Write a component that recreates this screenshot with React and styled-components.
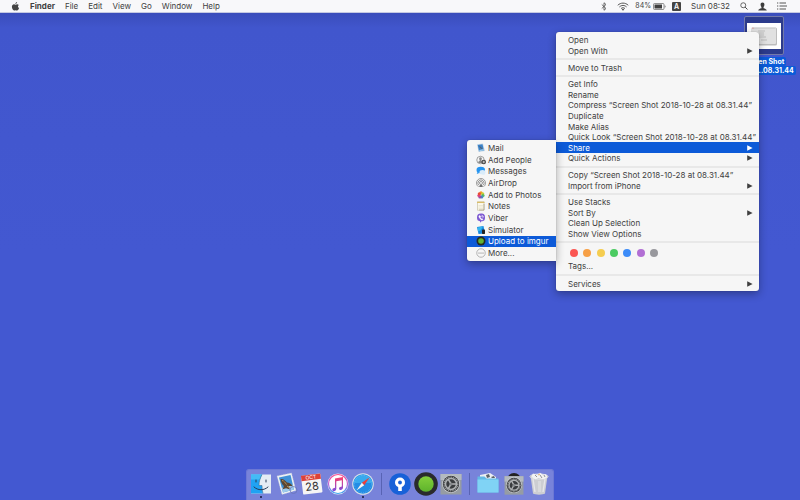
import React from 'react';

import styled, { createGlobalStyle, css } from 'styled-components';

const GlobalStyle = createGlobalStyle`
* {
  box-sizing: border-box;
}
body {
  margin: 0;
  overflow: hidden;
  font-family: Inter, 'Liberation Sans', sans-serif;
  font-size: 8px;
  color: #404040;
}
button {
  margin: 0;
  padding: 0;
  border: none;
  background: none;
  font: inherit;
  color: inherit;
  cursor: default;
}
svg {
  display: block;
  flex: none;
}
`

const Screen = styled.div`
  position: relative;
  display: flex;
  flex-direction: column;
  min-height: 100vh;
  background: linear-gradient(#3a4dbb 13px, #4156cd 28px, #4358d1 50%, #4358d1);
`

const MenuBar = styled.header`
  display: flex;
  align-items: center;
  justify-content: space-between;
  height: 13px;
  padding: 0 13px 0 11px;
  background: #f8f8fa;
  border-bottom: 1px solid #c5c9e2;
`

const BarMenus = styled.nav`
  display: flex;
  align-items: center;
  gap: 10px;
`

const BarItem = styled.button`
  line-height: 12px;
  font-weight: ${({ $bold }) => ($bold ? 700 : 400)};
`

const BarStatus = styled.div`
  display: flex;
  align-items: center;
  gap: 10px;
  line-height: 12px;
`

const Battery = styled.span`
  display: flex;
  align-items: center;
  gap: 2px;
  font-size: 7px;
  margin: 0 -4px;
`

const InputSource = styled.span`
  width: 9px;
  height: 9px;
  border-radius: 1px;
  background: #444;
  color: #fff;
  font-size: 7px;
  font-weight: 600;
  line-height: 9px;
  text-align: center;
`

const Desktop = styled.main`
  flex: 1;
  display: flex;
  flex-direction: column;
  align-items: flex-end;
  padding: 3px 3px 0;
`

const DesktopFile = styled.button`
  display: flex;
  flex-direction: column;
  align-items: center;
  width: 67px;
`

const Preview = styled.span`
  display: flex;
  align-items: center;
  justify-content: center;
  width: 40px;
  height: 39px;
  margin-bottom: 2px;
  border: 1px solid #737aa9;
  border-radius: 2px;
  background: #2c3b8c;
`

const FileName = styled.span`
  padding: 0 2px;
  border-radius: 2px;
  background: #0b5bd9;
  color: #fff;
  font-size: 7px;
  font-weight: 700;
  line-height: 9px;
  white-space: nowrap;
`

const panel = css`
  display: flex;
  flex-direction: column;
  background: #f6f6f6;
  box-shadow: 0 3px 8px rgba(0, 0, 0, 0.32), 0 0 1px rgba(0, 0, 0, 0.4);
`

const ContextMenu = styled.div`
  ${panel}
  position: absolute;
  top: 32px;
  right: 41px;
  width: 203px;
  min-height: 259px;
  padding: 3px 0 2px;
  border-radius: 3px;
`

const ShareMenu = styled.div`
  ${panel}
  position: absolute;
  top: 108px;
  right: 100%;
  width: 89px;
  min-height: 121px;
  padding: 2px 0;
  border-radius: 3px 0 0 3px;
`

const Row = styled.button`
  flex: 1 1 10px;
  display: flex;
  align-items: center;
  justify-content: space-between;
  padding: 0 6px 0 12px;
  line-height: 10px;
  text-align: left;
  white-space: nowrap;
  background: ${({ $active }) => ($active ? '#0c5ad8' : 'transparent')};
  color: ${({ $active }) => ($active ? '#fff' : 'inherit')};
`

const ShareRow = styled(Row)`
  justify-content: flex-start;
  gap: 2px;
  padding: 0 4px 0 9px;
`

const Divider = styled.hr`
  flex: none;
  width: 100%;
  height: 2px;
  margin: 2px 0;
  border: none;
  background: #e8e8e8;
`

const Tags = styled.div`
  flex: none;
  height: 27px;
  padding: 4px 12px 0;
`

const TagDots = styled.div`
  display: flex;
  gap: 5px;
  height: 8px;
  padding-left: 2px;
`

const Dot = styled.button`
  width: 8px;
  height: 8px;
  margin-right: ${({ $wide }) => ($wide ? '1px' : 0)};
  border-radius: 50%;
  background: ${({ $color }) => $color};
`

const TagsLabel = styled.button`
  display: block;
  margin-top: 4px;
  line-height: 10px;
`

const Dock = styled.footer`
  position: absolute;
  bottom: 0;
  left: 50%;
  transform: translateX(-50%);
  display: flex;
  justify-content: space-between;
  width: 308px;
  height: 31px;
  padding: 2px 2px 0;
  border: 1px solid #6c78d4;
  border-bottom: none;
  border-radius: 3px 3px 0 0;
  background: #7883da;
`

const DockItem = styled.button`
  display: flex;
  flex-direction: column;
  align-items: center;
  width: 24px;
`

const Running = styled.span`
  width: 2px;
  height: 2px;
  border-radius: 50%;
  background: #14183c;
`

const DockLine = styled.span`
  width: 10px;
  height: 22px;
  margin-top: 1px;
  background: linear-gradient(#5863b4, #5863b4) center / 1px 100% no-repeat;
`

const Arrow = () => (
  <svg width="6" height="6" viewBox="0 0 6 6" fill="currentColor">
    <path d="M.2 .2 5.600 3 .2 5.800z" />
  </svg>
)

const AppleIcon = () => (
  <svg width="9" height="9" viewBox="0 0 18 18" fill="#444">
    <path d="M12.2 0c.1 2-1.500 3.800-3.400 3.900C8.600 2.100 10.200.3 12.200 0zM15.600 6c-2.400 1.500-2.200 4.900.6 6-.7 2-2.300 5-4.100 5-1.200 0-1.600-.7-3-.7s-1.900.7-3 .7C4 17 1.800 12.900 1.800 9.700c0-3.300 2.100-5.100 4.200-5.100 1.300 0 2.300.8 3.100.8.8 0 2-.9 3.500-.9 1 0 2.200.5 3 1.500z" />
  </svg>
)

const BluetoothIcon = () => (
  <svg width="6" height="9" viewBox="0 0 12 18" fill="none" stroke="#444" strokeWidth="1.5">
    <path d="M1.500 5 10 13 6 16.500V1.500L10 5 1.500 13" />
  </svg>
)

const WifiIcon = () => (
  <svg width="12" height="9" viewBox="0 0 24 18" fill="none" stroke="#555" strokeWidth="2">
    <path d="M1.500 6.500C7.500 .8 16.500.8 22.500 6.500M4.800 9.900c4.200-4 10.200-4 14.400 0M8 13.200c2.300-2.200 5.700-2.200 8 0" />
    <path d="M12 17.500l-2.500-2.600c1.400-1.200 3.600-1.200 5 0z" fill="#555" stroke="none" />
  </svg>
)

const BatteryIcon = () => (
  <svg width="13" height="7" viewBox="0 0 26 14">
    <rect x="1" y="1" width="21" height="12" rx="2" fill="none" stroke="#666" strokeWidth="1.400" />
    <rect x="3" y="3" width="15" height="8" fill="#404040" />
    <path d="M23.500 4.500c2 .8 2 4.200 0 5z" fill="#555" />
  </svg>
)

const SearchIcon = () => (
  <svg width="8" height="8" viewBox="0 0 16 16" fill="none" stroke="#444" strokeWidth="1.600">
    <circle cx="6.500" cy="6.500" r="5" />
    <path d="M10.200 10.200 15 15" strokeWidth="2" />
  </svg>
)

const UserIcon = () => (
  <svg width="9" height="9" viewBox="0 0 18 18" fill="#3c3c3c">
    <path d="M9 1c3 0 4.200 2 3.800 5-.2 2-1 3.300-1.700 4v1.800c0 1 6.400 1.700 6.400 5.200H.5c0-3.500 6.400-4.200 6.400-5.200V10C6.200 9.300 5.400 8 5.200 6 4.800 3 6 1 9 1z" />
  </svg>
)

const ListIcon = () => (
  <svg width="10" height="8" viewBox="0 0 20 16" fill="none" stroke="#444" strokeWidth="1.800">
    <path d="M0 2h2.500M5 2h13M0 8h2.500M5 8h15M0 14h2.500M5 14h13" />
  </svg>
)

const ScreenshotThumb = () => (
  <svg width="34" height="26" viewBox="0 0 34 26">
    <rect width="34" height="26" fill="#fff" />
    <rect x="4.500" y="4.500" width="25.500" height="18" rx="1.500" fill="#bdbdbd" />
    <rect x="4.500" y="4" width="24.500" height="17" rx="1" fill="#e1e1e1" />
    <path d="M5 5.300h23.500" stroke="#cfcfcf" />
    <circle cx="6" cy="5.200" r=".6" fill="#e58b86" />
    <path d="M11 8h7M12 10h5M10 12h7M12 14h7M14 17h6" stroke="#b4b4b4" strokeWidth=".8" />
  </svg>
)

const Small = ({ children }) => (
  <svg width="10" height="10" viewBox="0 0 20 20">{children}</svg>
)

const shareIcons = {
  mail: (
    <Small>
      <path d="M2 2.500 14 1l4 15-13 2z" fill="#c3d6e6" />
      <path d="M3.500 4 13 2.600 15.800 15 6 16.300z" fill="#3b82c8" />
      <path d="M6 6c3 0 3 2 5 3l3 4c-4-1-6-3-8-7z" fill="#56606c" />
      <path d="M6.500 14l9-2v3l-9 1.300z" fill="#9ecbeb" />
    </Small>
  ),
  people: (
    <Small>
      <circle cx="9" cy="10" r="7.500" fill="none" stroke="#666" strokeWidth="1.200" />
      <path d="M9 4.500c2 0 3 1.500 2.600 3.500-.3 1.500-1 2-1 3.200L13 13v3H5l-1-2 3.400-2.500c.2-1.300-.7-2-1-3.500C6 6 7 4.500 9 4.500z" fill="#888" />
      <circle cx="15.500" cy="14" r="4.500" fill="#444" />
      <path d="M15.500 11.500v5M13 14h5" stroke="#fff" strokeWidth="1.200" />
    </Small>
  ),
  messages: (
    <Small>
      <ellipse cx="9.500" cy="8" rx="8.500" ry="6.500" fill="#2494f0" />
      <path d="M3 12l-1.500 4 5-2z" fill="#2494f0" />
      <ellipse cx="13" cy="12.500" rx="6" ry="4.500" fill="#d9ecfa" />
      <path d="M15 15l3.500 3-6-1.500z" fill="#d9ecfa" />
    </Small>
  ),
  airdrop: (
    <Small>
      <g fill="none" stroke="#707070" strokeWidth="1.400">
        <path d="M5 17.500a9 9 0 1 1 10 0M6.400 14.800a6 6 0 1 1 7.200 0M8 12.200a3 3 0 1 1 4 0" />
      </g>
      <path d="M10 10.500 14 18H6z" fill="#707070" />
    </Small>
  ),
  photos: (
    <Small>
      <circle cx="10" cy="10" r="9" fill="#f7f7f4" />
      <circle cx="10" cy="5.800" r="3.300" fill="#f39a25" />
      <circle cx="13.400" cy="7.500" r="3.200" fill="#c8cc35" />
      <circle cx="14" cy="11" r="3.200" fill="#55b867" />
      <circle cx="11.500" cy="14" r="3.200" fill="#4789c8" />
      <circle cx="7.800" cy="13.800" r="3.200" fill="#8754a5" />
      <circle cx="5.900" cy="11" r="3.200" fill="#d94184" />
      <circle cx="6.700" cy="7.500" r="3.200" fill="#e94d35" />
    </Small>
  ),
  notes: (
    <Small>
      <path d="M3 1.500h13v17H3z" fill="#fbf8ea" stroke="#b7ad88" />
      <path d="M2 1.500h15v2.500H2z" fill="#d9bd68" />
      <path d="M16 6v12H6" fill="none" stroke="#aaa38b" strokeWidth="1.500" />
      <path d="M5 9h9M5 12h9M5 15h9" stroke="#ded8bf" />
    </Small>
  ),
  viber: (
    <Small>
      <path d="M10 1c6 0 8 2 8 8s-2 7.500-7 7.500L8 19.500v-3.200C3.500 16 2 14 2 9s2-8 8-8z" fill="#7d59d2" />
      <path d="M6.800 5c-1.500.8-1.500 2.500.2 4.800 1.800 2.700 3.700 4.200 5.500 4.200 1.500-1 1.700-1.800 0-2.700l-1.500.4c-1.400-.7-2-1.700-2.500-3.200l1-1C9 6 8.300 5 6.800 5zM11 4.500c2.500.2 4 1.800 4 4.500M11 7c1.300.2 1.800.8 1.800 2" fill="#fff" stroke="#fff" strokeWidth=".8" />
    </Small>
  ),
  simulator: (
    <Small>
      <path d="M2 4 15 2l3 15-13 1z" fill="#1788df" />
      <path d="M3 5l11-2-5 8-5 2z" fill="#35b6ee" />
      <rect x="12" y="9" width="6" height="9" rx="1.500" fill="#222" />
    </Small>
  ),
  imgur: (
    <Small>
      <circle cx="10" cy="10" r="9" fill="#262b20" />
      <circle cx="10" cy="10" r="5.600" fill="#61b433" />
    </Small>
  ),
  more: (
    <Small>
      <circle cx="10" cy="10" r="8.500" fill="none" stroke="#777" strokeWidth="1" />
      <circle cx="6" cy="10" r="1.100" fill="#666" />
      <circle cx="10" cy="10" r="1.100" fill="#666" />
      <circle cx="14" cy="10" r="1.100" fill="#666" />
    </Small>
  ),
}

const Big = ({ children }) => (
  <svg width="24" height="24" viewBox="0 0 24 24">{children}</svg>
)

const Gear = () => (
  <g>
    <path d="M1.500 2h21v20.500h-21z" fill="#969ca3" />
    <path d="M1.500 2h21v6h-21z" fill="#b4babf" />
    <circle cx="12" cy="12" r="8.800" fill="#d3d5d7" />
    <circle cx="12" cy="12" r="8.200" fill="#393b3e" />
    <circle cx="12" cy="12" r="6.800" fill="none" stroke="#a3a5a7" strokeWidth="1.200" strokeDasharray="1 .78" />
    <circle cx="12" cy="12" r="5.500" fill="none" stroke="#aeb0b2" strokeWidth="1.500" />
    <path d="M12 12h5.500M12 12 9.200 7.200M12 12l-2.800 4.800" stroke="#b2b4b6" strokeWidth="1.500" />
    <circle cx="12" cy="12" r="1.600" fill="#85888b" />
  </g>
)

const dockIcons = {
  finder: (
    <Big>
      <path d="M2 2.500h20v19H2z" fill="#e5edf4" />
      <path d="M2 2.500h11c-2 4-3 7-3 11h3c0 3 .2 5 1 8H2z" fill="#20a2f3" />
      <path d="M2 2.500h11l-2 5H2z" fill="#43bbf6" />
      <path d="M13 2.500c-2 4-3 7-3 11h3c0 3 .2 5 1 8" fill="none" stroke="#3f6d92" strokeWidth=".6" />
      <path d="M7 8v2M17 8v2M5 15c4 3.700 10 3.700 14 0" fill="none" stroke="#263b55" strokeWidth="1" strokeLinecap="round" />
    </Big>
  ),
  mail: (
    <Big>
      <path d="M2 4 16.500 1l4.500 17.500-14 4z" fill="#edf1f3" stroke="#c8d0d7" strokeWidth=".5" strokeDasharray="1 1" />
      <path d="M4 5.500 15.500 3 19 17.500l-11 3z" fill="#3f91d6" />
      <path d="M6.800 16l10.700-3.500 1.500 5-11 3z" fill="#9ecbeb" />
      <path d="M5.500 7c3-.5 5 1.600 6.500 3.500 2 0 4.500 1.200 6 4-2-.6-3.200-.4-4.500 0l1.500 3-4-1.200-3.500 1 1.500-3.300C7 12.500 6 10 5.500 7z" fill="#5b4733" />
      <path d="M7 8.500c2 .4 3 2 4.500 4M12 14l3 2" stroke="#c19a5d" strokeWidth="1" />
      <circle cx="18.500" cy="18" r="3.500" fill="none" stroke="#6774b4" strokeWidth="1" opacity=".7" />
    </Big>
  ),
  calendar: (
    <Big>
      <g transform="rotate(-7 12 12)">
        <rect x="2" y="2.500" width="19.500" height="19" rx="1" fill="#f5f5f5" />
        <path d="M2 2.500h19.500v5.500H2z" fill="#dc4238" />
        <text x="11.700" y="7" textAnchor="middle" fontSize="5" fill="#fff">OCT</text>
        <text x="11.700" y="18.300" textAnchor="middle" fontSize="11" fill="#333">28</text>
      </g>
    </Big>
  ),
  itunes: (
    <Big>
      <defs>
        <linearGradient id="tunes" x2="0" y2="1">
          <stop offset="0" stopColor="#f74d8d" />
          <stop offset=".5" stopColor="#bd62da" />
          <stop offset="1" stopColor="#36a9f0" />
        </linearGradient>
        <linearGradient id="note" x2="0" y2="1">
          <stop offset="0" stopColor="#ff4068" />
          <stop offset="1" stopColor="#784ee5" />
        </linearGradient>
      </defs>
      <circle cx="12" cy="12" r="10.500" fill="#ecebf5" />
      <circle cx="12" cy="12" r="9.500" fill="#fff" stroke="url(#tunes)" strokeWidth="1.200" />
      <path d="M9 6.500 17 5v10.500c0 3-4 3.200-4 1 0-1.600 2-1.700 2.800-2V8.200L10.300 9.300v7.500c0 3-4 3.200-4 1 0-1.600 2-1.700 2.700-2z" fill="url(#note)" />
    </Big>
  ),
  safari: (
    <Big>
      <circle cx="12" cy="12" r="10.800" fill="#dbe2e8" />
      <circle cx="12" cy="12" r="9.800" fill="#228de5" />
      <path d="M2.500 11a9.600 9.600 0 0 1 19 0z" fill="#38a9ee" />
      <circle cx="12" cy="12" r="8.500" fill="none" stroke="#8fcaf4" strokeWidth="1" strokeDasharray=".4 1.400" />
      <path d="M18.500 5.500 13.200 13.200 10.800 10.800z" fill="#ed3f38" />
      <path d="M5.500 18.500 10.800 10.800l2.400 2.400z" fill="#f3f3f3" />
    </Big>
  ),
  sourcetree: (
    <Big>
      <circle cx="12" cy="12" r="10.800" fill="#1761d8" />
      <circle cx="12" cy="10.500" r="5" fill="#fff" />
      <path d="M10.200 14h3.600v5h-3.600z" fill="#fff" />
      <circle cx="12" cy="10.500" r="1.900" fill="#1761d8" />
    </Big>
  ),
  imgur: (
    <Big>
      <defs>
        <linearGradient id="lime" x2="0" y2="1">
          <stop offset="0" stopColor="#83cf3b" />
          <stop offset="1" stopColor="#5eb32c" />
        </linearGradient>
      </defs>
      <circle cx="12" cy="12" r="11.800" fill="#2a2b2d" />
      <circle cx="12" cy="12" r="7.700" fill="url(#lime)" />
    </Big>
  ),
  settings: <Big><Gear /></Big>,
  folder: (
    <Big>
      <path d="M4 3 14 1l6 4v5H4z" fill="#eceff2" />
      <path d="M10 3l3-1 1 3-3 1zM15 5l3-1 1 2h-3z" fill="#5b6268" />
      <path d="M1.500 4.500h7l2 2h12v14h-21z" fill="#62b9e5" />
      <path d="M1.500 7.500h21v13h-21z" fill="#80d3f5" />
    </Big>
  ),
  preferences: (
    <Big>
      <circle cx="12" cy="8" r="7" fill="#222" />
      <g transform="translate(1.200 2.400) scale(.9)"><Gear /></g>
    </Big>
  ),
  trash: (
    <Big>
      <path d="M3.500 4 20.500 4 18 21.500c-2 1.500-10 1.500-12 0z" fill="#cdced2" />
      <path d="M6 7l2 13M18 7l-2 13" stroke="#e6e6e9" strokeWidth="1.400" />
      <path d="M11 9h3v11h-3z" fill="#d9dadd" />
      <ellipse cx="12" cy="4.500" rx="9" ry="2.500" fill="#a9abb0" stroke="#eee" strokeWidth=".8" />
      <path d="M4 5 6 1.500l4 1.200 3-2 3 2 3-.5 1.500 3-4 2-5-1-3 1z" fill="#f3f3f3" />
      <path d="M8 3l2 2M13 3l2 3M17 3l1 2" stroke="#85868c" strokeWidth=".9" />
      <path d="M11 3l2-1" stroke="#e5ac68" />
    </Big>
  ),
}

const groups = [
  [{ name: 'Open' }, { name: 'Open With', more: true }],
  [{ name: 'Move to Trash' }],
  [
    { name: 'Get Info' },
    { name: 'Rename' },
    { name: 'Compress “Screen Shot 2018-10-28 at 08.31.44”' },
    { name: 'Duplicate' },
    { name: 'Make Alias' },
    { name: 'Quick Look “Screen Shot 2018-10-28 at 08.31.44”' },
    { name: 'Share', more: true, active: true },
    { name: 'Quick Actions', more: true },
  ],
  [{ name: 'Copy “Screen Shot 2018-10-28 at 08.31.44”' }, { name: 'Import from iPhone', more: true }],
  [{ name: 'Use Stacks' }, { name: 'Sort By', more: true }, { name: 'Clean Up Selection' }, { name: 'Show View Options' }],
]

const shareItems = [
  ['mail', 'Mail'],
  ['people', 'Add People'],
  ['messages', 'Messages'],
  ['airdrop', 'AirDrop'],
  ['photos', 'Add to Photos'],
  ['notes', 'Notes'],
  ['viber', 'Viber'],
  ['simulator', 'Simulator'],
  ['imgur', 'Upload to imgur'],
  ['more', 'More...'],
]

const tagColors = [
  ['Red', '#fb5652'],
  ['Orange', '#f7a046'],
  ['Yellow', '#f5cd50'],
  ['Green', '#4bcb62'],
  ['Blue', '#3d8cf8'],
  ['Purple', '#b26fd4'],
  ['Gray', '#98989d'],
]

const dockItems = ['finder', 'mail', 'calendar', 'itunes', 'safari', null, 'sourcetree', 'imgur', 'settings', null, 'folder', 'preferences', 'trash']
const running = ['finder', 'safari']

const MenuRow = ({ name, more, active }) => (
  <Row $active={active}>
    {name}
    {more && <Arrow />}
  </Row>
)

const App = () => {
  return (
    <Screen>
      <GlobalStyle />
      <MenuBar>
        <BarMenus>
          <BarItem aria-label="Apple"><AppleIcon /></BarItem>
          <BarItem $bold>Finder</BarItem>
          {['File', 'Edit', 'View', 'Go', 'Window', 'Help'].map((e) => <BarItem key={e}>{e}</BarItem>)}
        </BarMenus>
        <BarStatus>
          <BluetoothIcon />
          <WifiIcon />
          <Battery>84%<BatteryIcon /></Battery>
          <InputSource>A</InputSource>
          <span>Sun 08:32</span>
          <BarItem aria-label="Search"><SearchIcon /></BarItem>
          <BarItem aria-label="User"><UserIcon /></BarItem>
          <BarItem aria-label="Notifications"><ListIcon /></BarItem>
        </BarStatus>
      </MenuBar>

      <Desktop>
        <DesktopFile>
          <Preview><ScreenshotThumb /></Preview>
          <FileName>Screen Shot</FileName>
          <FileName>2018-1...08.31.44</FileName>
        </DesktopFile>
      </Desktop>

      <ContextMenu>
        {groups.map((rows, i) => (
          <React.Fragment key={i}>
            {rows.map((row) => <MenuRow key={row.name} {...row} />)}
            <Divider />
          </React.Fragment>
        ))}
        <Tags>
          <TagDots>
            {tagColors.map(([name, color], i) => <Dot key={name} aria-label={name} $color={color} $wide={i % 3 === 1} />)}
          </TagDots>
          <TagsLabel>Tags...</TagsLabel>
        </Tags>
        <Divider />
        <MenuRow name="Services" more />
        <ShareMenu>
          {shareItems.map(([icon, name]) => (
            <ShareRow key={icon} $active={icon === 'imgur'}>
              {shareIcons[icon]}
              {name}
            </ShareRow>
          ))}
        </ShareMenu>
      </ContextMenu>

      <Dock>
        {dockItems.map((e, i) => e ? (
          <DockItem key={i} aria-label={e}>
            {dockIcons[e]}
            {running.includes(e) && <Running />}
          </DockItem>
        ) : <DockLine key={i} />)}
      </Dock>
    </Screen>
  );
};

export default App;
